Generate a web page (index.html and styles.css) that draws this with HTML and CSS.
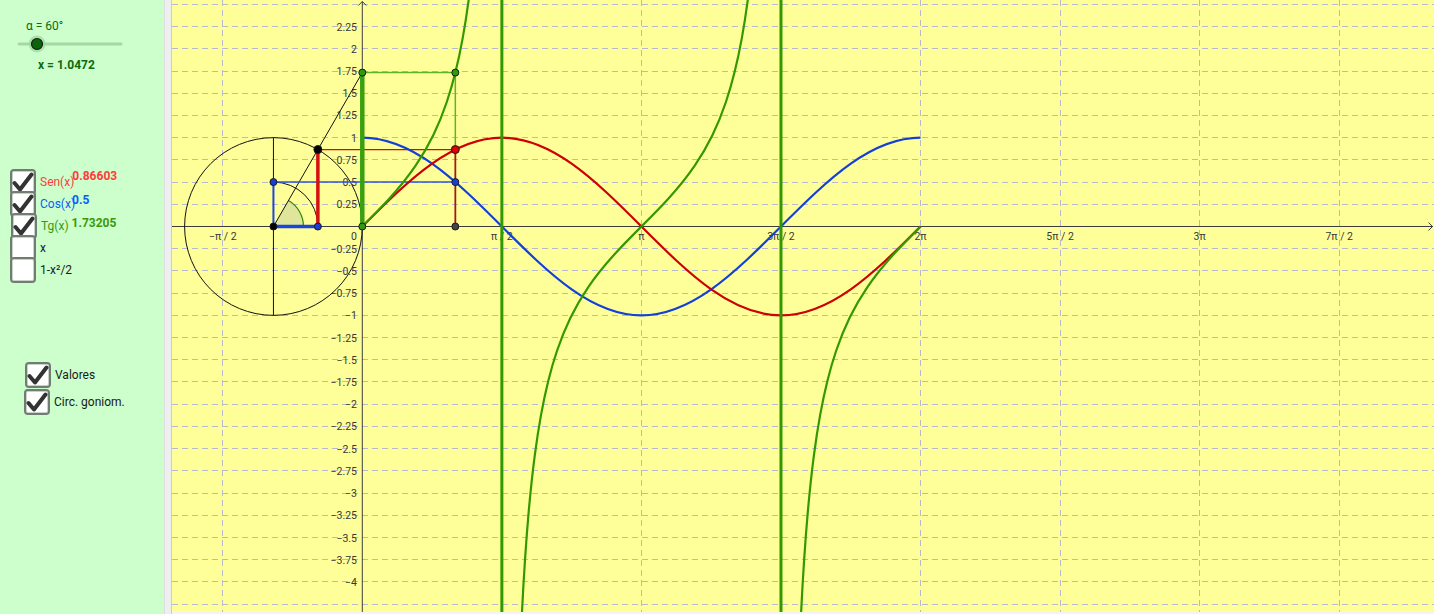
FILE: index.html
```html
<!DOCTYPE html>
<html lang="es">
<head>
<meta charset="utf-8">
<title>Funciones trigonométricas</title>
<link rel="stylesheet" href="styles.css">
</head>
<body>
<div class="app">
  <div class="panel">
    <div class="alpha">α = 60°</div>
    <svg class="slider" width="130" height="20" viewBox="0 0 130 20">
      <line class="track" x1="9" y1="10" x2="111" y2="10"/>
      <circle class="halo" cx="27" cy="10" r="8.5"/>
      <circle class="knob" cx="27" cy="10" r="5.5"/>
    </svg>
    <div class="xval">x = 1.0472</div>

    <div class="group1">
      <div class="row">
        <span class="box"><svg viewBox="0 0 22 22"><path class="tick" d="M2.5 12 L8 18.5 L19.5 3.5"/></svg></span>
        <span class="cap red">Sen(x)</span><span class="val red v1">0.86603</span>
      </div>
      <div class="row">
        <span class="box"><svg viewBox="0 0 22 22"><path class="tick" d="M2.5 12 L8 18.5 L19.5 3.5"/></svg></span>
        <span class="cap blue">Cos(x)</span><span class="val blue v2">0.5</span>
      </div>
      <div class="row">
        <span class="box shift"><svg viewBox="0 0 22 22"><path class="tick" d="M2.5 12 L8 18.5 L19.5 3.5"/></svg></span>
        <span class="cap green">Tg(x)</span><span class="val green v3">1.73205</span>
      </div>
      <div class="row">
        <span class="box"></span>
        <span class="cap">x</span>
      </div>
      <div class="row">
        <span class="box"></span>
        <span class="cap">1-x²/2</span>
      </div>
    </div>

    <div class="group2">
      <div class="row2">
        <span class="box"><svg viewBox="0 0 22 22"><path class="tick" d="M2.5 12 L8 18.5 L19.5 3.5"/></svg></span>
        <span class="cap">Valores</span>
      </div>
      <div class="row2 left1">
        <span class="box"><svg viewBox="0 0 22 22"><path class="tick" d="M2.5 12 L8 18.5 L19.5 3.5"/></svg></span>
        <span class="cap">Circ. goniom.</span>
      </div>
    </div>
  </div>
  <div class="sep"></div>
  <div class="graph">
    <svg width="1262" height="612" viewBox="0 0 1262 612">
      <defs>
        <path id="tb" class="ns" d="M0 0 C0.1 0.1 0.2 0.19977 0.3 0.30934 C0.4 0.41891 0.5 0.53734 0.6 0.68414 C0.66667 0.78201 0.73333 0.8923 0.8 1.02964 C0.85 1.13265 0.9 1.25061 0.95 1.39838 C0.98333 1.4969 1.01667 1.60868 1.05 1.74332 C1.07667 1.85103 1.10333 1.97321 1.13 2.1197 C1.15333 2.24787 1.17667 2.39444 1.2 2.57215 C1.22333 2.74986 1.24667 2.95789 1.27 3.2237 C1.29667 3.52749 1.32333 3.89923 1.35 4.4552"/>
      </defs>
      <!-- grid -->
      <path class="grid" d="M0 4.38H1262M0 26.59H1262M0 48.8H1262M0 71.01H1262M0 93.23H1262M0 115.44H1262M0 137.65H1262M0 159.86H1262M0 182.08H1262M0 204.29H1262M0 248.71H1262M0 270.93H1262M0 293.14H1262M0 315.35H1262M0 337.56H1262M0 359.78H1262M0 381.99H1262M0 404.2H1262M0 426.41H1262M0 448.63H1262M0 470.84H1262M0 493.05H1262M0 515.26H1262M0 537.48H1262M0 559.69H1262M0 581.9H1262M0 604.11H1262"/>
      <path class="grid" d="M50.74 0V612M329.86 0V612M469.42 0V612M608.98 0V612M748.54 0V612M888.1 0V612M1027.66 0V612M1167.22 0V612"/>

      <!-- axes -->
      <path class="axis" d="M0 226.5H1261M190.3 612V1.5"/>
      <path class="axis" d="M1256.5 222.5L1260.5 226.5L1256.5 230.5M186.3 5.5L190.3 1.5L194.3 5.5"/>

      <!-- y labels -->
      <g class="lbl ylbl">
        <text x="185" y="30.6">2.25</text>
        <text x="185" y="52.8">2</text>
        <text x="185" y="75">1.75</text>
        <text x="185" y="97.2">1.5</text>
        <text x="185" y="119.4">1.25</text>
        <text x="185" y="141.7">1</text>
        <text x="185" y="163.9">0.75</text>
        <text x="185" y="186.1">0.5</text>
        <text x="185" y="208.3">0.25</text>
        <text x="185" y="240">0</text>
        <text x="185" y="252.7">−0.25</text>
        <text x="185" y="274.9">−0.5</text>
        <text x="185" y="297.1">−0.75</text>
        <text x="185" y="319.4">−1</text>
        <text x="185" y="341.6">−1.25</text>
        <text x="185" y="363.8">−1.5</text>
        <text x="185" y="386">−1.75</text>
        <text x="185" y="408.2">−2</text>
        <text x="185" y="430.4">−2.25</text>
        <text x="185" y="452.6">−2.5</text>
        <text x="185" y="474.8">−2.75</text>
        <text x="185" y="497">−3</text>
        <text x="185" y="519.3">−3.25</text>
        <text x="185" y="541.5">−3.5</text>
        <text x="185" y="563.7">−3.75</text>
        <text x="185" y="585.9">−4</text>
      </g>
      <!-- x labels -->
      <g class="lbl xlbl">
        <text x="50.74" y="240">−π / 2</text>
        <text x="329.86" y="240">π / 2</text>
        <text x="469.42" y="240">π</text>
        <text x="608.98" y="240">3π / 2</text>
        <text x="748.54" y="240">2π</text>
        <text x="888.1" y="240">5π / 2</text>
        <text x="1027.66" y="240">3π</text>
        <text x="1167.22" y="240">7π / 2</text>
      </g>

      <!-- unit circle -->
      <circle class="thin" cx="101.45" cy="226.5" r="88.85"/>
      <path class="thin" d="M101.45 137.65V315.35"/>
      <path class="sector" d="M101.45 226.5L131.45 226.5A30 30 0 0 0 116.45 200.52Z"/>
      <path class="sectorarc" d="M131.45 226.5A30 30 0 0 0 116.45 200.52"/>
      <path class="thin" d="M101.45 182.07A44.43 44.43 0 0 1 145.88 226.5"/>
      <path class="thin" d="M101.45 226.5L190.3 72.6"/>

      <!-- projection lines -->
      <path class="redthin" d="M145.88 149.55H283.34"/>
      <path class="bluethin" d="M101.45 182.07H283.34"/>
      <path class="greenthin" d="M190.3 72.6H283.34V149.55"/>
      <path class="darkred" d="M283.34 149.55V226.5"/>
      <path class="bluemid" d="M101.45 226.5V182.07"/>

      <!-- curves -->
      <g transform="translate(190.3 226.5) scale(88.85 -88.85)">
        <path class="ns cos" d="M0 1 C0.2618 1 0.5236 0.8922 0.7854 0.7071 C1.0472 0.522 1.309 0.2618 1.5708 0 C1.8326 -0.2618 2.0944 -0.522 2.3562 -0.7071 C2.618 -0.8922 2.8798 -1 3.1416 -1 C3.4034 -1 3.6652 -0.8922 3.927 -0.7071 C4.1888 -0.522 4.4506 -0.2618 4.7124 0 C4.9742 0.2618 5.236 0.522 5.4978 0.7071 C5.7596 0.8922 6.0214 1 6.2832 1"/>
        <path class="ns sin" d="M0 0 C0.2618 0.2618 0.5236 0.522 0.7854 0.7071 C1.0472 0.8922 1.309 1 1.5708 1 C1.8326 1 2.0944 0.8922 2.3562 0.7071 C2.618 0.522 2.8798 0.2618 3.1416 0 C3.4034 -0.2618 3.6652 -0.522 3.927 -0.7071 C4.1888 -0.8922 4.4506 -1 4.7124 -1 C4.9742 -1 5.236 -0.8922 5.4978 -0.7071 C5.7596 -0.522 6.0214 -0.2618 6.2832 0"/>
        <g class="tan">
          <use href="#tb"/>
          <use href="#tb" transform="translate(3.14159 0) scale(-1 -1)"/>
          <use href="#tb" transform="translate(3.14159 0)"/>
          <use href="#tb" transform="translate(6.28319 0) scale(-1 -1)"/>
        </g>
      </g>
      <path class="asym" d="M329.86 0V612M608.98 0V612"/>

      <!-- thick segments -->
      <path class="bluethick" d="M101.45 226.5H145.88"/>
      <path class="redthick" d="M145.88 149.55V226.5"/>
      <path class="greenthick" d="M190.3 226.5V72.6"/>

      <!-- points -->
      <circle class="pt pblack" cx="101.45" cy="226.5" r="3.5"/>
      <circle class="pt pblack" cx="145.88" cy="149.55" r="4"/>
      <circle class="pt pblue" cx="101.45" cy="182.07" r="3.5"/>
      <circle class="pt pblue" cx="145.88" cy="226.5" r="3.5"/>
      <circle class="pt pgreen" cx="190.3" cy="226.5" r="3.5"/>
      <circle class="pt pgreen" cx="190.3" cy="72.6" r="3.5"/>
      <circle class="pt pgreen" cx="283.34" cy="72.6" r="3.5"/>
      <circle class="pt pred" cx="283.34" cy="149.55" r="4"/>
      <circle class="pt pblue" cx="283.34" cy="182.07" r="3.5"/>
      <circle class="pt pgray" cx="283.34" cy="226.5" r="3.5"/>
    </svg>
  </div>
</div>
</body>
</html>
```

FILE: styles.css
```css
body {
  margin: 0;
  font-family: Roboto, "Liberation Sans", sans-serif;
}

.app {
  display: flex;
  width: 1434px;
  height: 614px;
  overflow: hidden;
  background: #f4f4f4;
}

.panel {
  flex: none;
  width: 164px;
  height: 614px;
  box-sizing: border-box;
  padding-top: 19px;
  background: #ccffcc;
}

.sep {
  flex: none;
  width: 8px;
  height: 614px;
  box-sizing: border-box;
  background: #efefef;
  border-left: 1px solid #dedede;
  border-right: 1px solid #cccccc;
}

.graph {
  flex: none;
  width: 1262px;
  height: 612px;
  background: #ffff99;
}

.graph svg {
  display: block;
}

/* slider */
.alpha {
  margin-left: 26px;
  font-size: 12px;
  line-height: 14px;
  color: #0c6a0c;
}

.slider {
  display: block;
  margin: 1px 0 0 10px;
}

.track {
  stroke: #a6d7a6;
  stroke-width: 3;
  stroke-linecap: round;
}

.halo {
  fill: #9fdc9f;
  opacity: 0.8;
}

.knob {
  fill: #0a640a;
  stroke: #1a1a1a;
  stroke-width: 1.2;
}

.xval {
  margin: 4px 0 0 38px;
  font-size: 12px;
  font-weight: bold;
  line-height: 14px;
  color: #0c6a0c;
}

/* checkboxes */
.group1 {
  margin-top: 97px;
  padding-left: 10px;
}

.row {
  display: flex;
  align-items: flex-start;
  height: 22px;
}

.group2 {
  margin-top: 83px;
  padding-left: 25px;
}

.row2 {
  display: flex;
  align-items: flex-start;
  height: 27px;
}

.left1 {
  margin-left: -1px;
}

.box {
  flex: none;
  display: block;
  width: 26px;
  height: 26px;
  box-sizing: border-box;
  border: 2px solid #717d72;
  border-radius: 4px;
  background: #ffffff;
  box-shadow: inset 0 0 0 1px #c9d2c9;
}

.box svg {
  display: block;
  width: 22px;
  height: 22px;
}

.shift {
  margin-left: 1px;
}

.tick {
  fill: none;
  stroke: #333333;
  stroke-width: 4;
  stroke-linecap: round;
  stroke-linejoin: round;
}

.cap {
  margin-left: 4px;
  font-size: 12px;
  line-height: 26px;
  color: #1a1a1a;
  white-space: nowrap;
}

.row2 .cap {
  margin-left: 4px;
}

.shift + .cap {
  margin-left: 4px;
}

.val {
  font-size: 12px;
  font-weight: bold;
  line-height: 14px;
  white-space: nowrap;
}

.v1 { margin-left: -2px; }
.v2 { margin-left: -3px; margin-top: 2px; }
.v3 { margin-left: 3px; margin-top: 3px; }

.red { color: #ff3b3b; }
.blue { color: #0a5cff; }
.green { color: #3a9a0a; }

/* graph */
.grid {
  fill: none;
  stroke: #b9b9cc;
  stroke-width: 1;
  stroke-dasharray: 6 4;
  shape-rendering: crispEdges;
}

.axis {
  fill: none;
  stroke: #3c3c3c;
  stroke-width: 1;
}

.lbl {
  font-family: Roboto, "Liberation Sans", sans-serif;
  font-size: 10.5px;
  fill: #383838;
}

.ylbl { text-anchor: end; }
.xlbl { text-anchor: middle; }

.thin {
  fill: none;
  stroke: #111111;
  stroke-width: 1;
}

.sector {
  fill: #dfe59a;
  stroke: none;
}

.sectorarc {
  fill: none;
  stroke: #2d8a00;
  stroke-width: 1.2;
}

.ns {
  vector-effect: non-scaling-stroke;
  fill: none;
}

.sin {
  stroke: #cc0000;
  stroke-width: 2.2;
}

.cos {
  stroke: #1340d8;
  stroke-width: 2.2;
}

.tan {
  fill: none;
  stroke: #339900;
  stroke-width: 2.2;
}

.asym {
  fill: none;
  stroke: #339900;
  stroke-width: 3;
}

.redthin {
  fill: none;
  stroke: #cc1111;
  stroke-width: 1.2;
}

.bluethin {
  fill: none;
  stroke: #2e55e0;
  stroke-width: 1.5;
}

.greenthin {
  fill: none;
  stroke: #5fb52a;
  stroke-width: 1.5;
}

.darkred {
  fill: none;
  stroke: #a01818;
  stroke-width: 1.8;
}

.bluemid {
  fill: none;
  stroke: #1f47e0;
  stroke-width: 2;
}

.bluethick {
  fill: none;
  stroke: #1a44e0;
  stroke-width: 3.5;
}

.redthick {
  fill: none;
  stroke: #d41010;
  stroke-width: 3.5;
}

.greenthick {
  fill: none;
  stroke: #3aa010;
  stroke-width: 4.5;
}

.pt {
  stroke: #1a1a1a;
  stroke-width: 1;
}

.pblack { fill: #000000; }
.pblue { fill: #1a3fd0; }
.pgreen { fill: #2f9a10; }
.pred { fill: #e00000; }
.pgray { fill: #444444; }
```
